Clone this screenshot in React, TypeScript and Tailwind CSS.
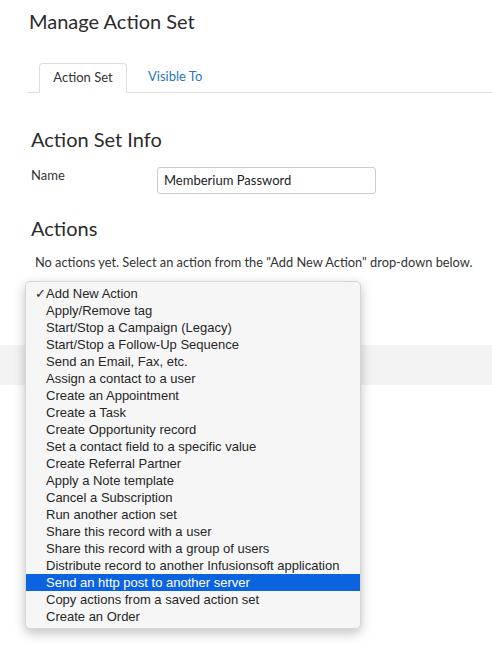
import React from "react";

const items = [
  "Add New Action",
  "Apply/Remove tag",
  "Start/Stop a Campaign (Legacy)",
  "Start/Stop a Follow-Up Sequence",
  "Send an Email, Fax, etc.",
  "Assign a contact to a user",
  "Create an Appointment",
  "Create a Task",
  "Create Opportunity record",
  "Set a contact field to a specific value",
  "Create Referral Partner",
  "Apply a Note template",
  "Cancel a Subscription",
  "Run another action set",
  "Share this record with a user",
  "Share this record with a group of users",
  "Distribute record to another Infusionsoft application",
  "Send an http post to another server",
  "Copy actions from a saved action set",
  "Create an Order",
];

export default function App() {
  return (
    <div
      className="relative w-[492px] h-[651px] bg-white overflow-hidden text-[#333]"
      style={{ fontFamily: "Lato, 'Liberation Sans', sans-serif" }}
    >
      <div className="pl-[29px] pt-[9px]">
        <h1 className="text-[20px] leading-[24px] text-[#2b2b2b]">Manage Action Set</h1>
      </div>
      <div className="ml-[28px] mt-[30px] flex items-end border-b border-[#dddddd] h-[30px]">
        <div className="ml-[11px] w-[88px] h-[30px] -mb-px border border-[#dddddd] border-b-white rounded-t-[4px] bg-white flex items-center justify-center text-[13px] text-[#333]">
          Action Set
        </div>
        <div className="ml-[21px] h-[30px] flex items-center text-[13px] text-[#2a76b8]">Visible To</div>
      </div>
      <div className="pl-[31px] pt-[34px]">
        <h2 className="text-[20px] leading-[24px] text-[#2b2b2b]">Action Set Info</h2>
        <div className="flex items-start mt-[16px]">
          <div className="w-[126px] text-[13px] leading-[16px]">Name</div>
          <div className="w-[219px] h-[27px] border border-[#cccccc] rounded-[3px] flex items-center px-[6px] text-[13px] text-[#222]">
            Memberium Password
          </div>
        </div>
        <h2 className="mt-[22px] text-[20px] leading-[24px] text-[#2b2b2b]">Actions</h2>
        <p className="mt-[14px] ml-[4px] text-[12.8px] leading-[16px]">
          No actions yet. Select an action from the "Add New Action" drop-down below.
        </p>
      </div>
      <div className="ml-[25px] mt-[18px] w-[300px] h-[20px] border-t border-[#999]" />
      <div className="mt-[37px] h-[40px] bg-[#f3f3f3]" />

      <div
        className="absolute left-[25px] top-[281px] w-[336px] bg-[#f6f6f6] rounded-[5px] border border-[#d6d6d6] pt-[3px] pb-[3px] shadow-[0_4px_12px_rgba(0,0,0,0.25)]"
        style={{ fontFamily: "'Liberation Sans', Arial, sans-serif" }}
      >
        {items.map((t, i) => {
          const sel = t === "Send an http post to another server";
          return (
            <div
              key={i}
              className={`relative h-[17px] flex items-center pl-[20px] text-[13px] ${sel ? "bg-[#0b63e0] text-white" : "text-[#262626]"}`}
            >
              {i === 0 && <span className="absolute left-[9px] text-[13px]">✓</span>}
              {t}
            </div>
          );
        })}
      </div>
    </div>
  );
}
